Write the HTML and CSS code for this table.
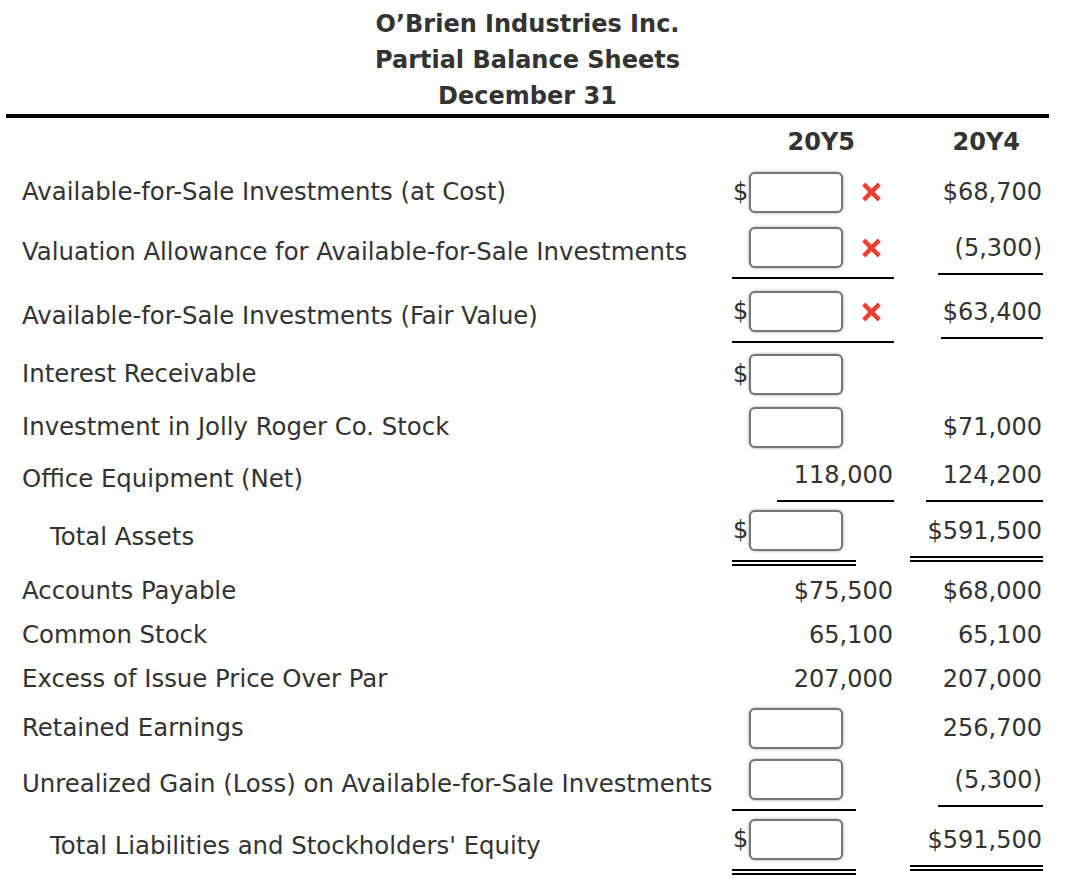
FILE: index.html
```html
<!DOCTYPE html>
<html lang="en">
<head>
<meta charset="utf-8">
<title>O’Brien Industries Inc. Partial Balance Sheets</title>
<link rel="stylesheet" href="styles.css">
</head>
<body>
<div class="sheet">
  <div class="title">
    <div>O’Brien Industries Inc.</div>
    <div>Partial Balance Sheets</div>
    <div>December 31</div>
  </div>

  <div class="row h48 head">
    <div class="lbl"></div>
    <div class="cell hd5">20Y5</div>
    <div class="cell hd4">20Y4</div>
  </div>

  <div class="row h52">
    <div class="lbl">Available-for-Sale Investments (at Cost)</div>
    <div class="cell start"><span class="ans"><span class="dol">$</span><input type="text"><svg class="mark" viewBox="0 0 19 18"><path d="M1.8 1.2 L17.2 16.8 M17.2 1.2 L1.8 16.8"/></svg></span></div>
    <div class="cell"><span class="num">$68,700</span></div>
  </div>

  <div class="row h68">
    <div class="lbl">Valuation Allowance for Available-for-Sale Investments</div>
    <div class="cell start"><span class="ans ul"><span class="dol"></span><input type="text"><svg class="mark" viewBox="0 0 19 18"><path d="M1.8 1.2 L17.2 16.8 M17.2 1.2 L1.8 16.8"/></svg></span></div>
    <div class="cell"><span class="num ul">(5,300)</span></div>
  </div>

  <div class="row h60">
    <div class="lbl">Available-for-Sale Investments (Fair Value)</div>
    <div class="cell start"><span class="ans ul"><span class="dol">$</span><input type="text"><svg class="mark" viewBox="0 0 19 18"><path d="M1.8 1.2 L17.2 16.8 M17.2 1.2 L1.8 16.8"/></svg></span></div>
    <div class="cell"><span class="num ul tight">$63,400</span></div>
  </div>

  <div class="row h56">
    <div class="lbl">Interest Receivable</div>
    <div class="cell start"><span class="ans"><span class="dol">$</span><input type="text"></span></div>
    <div class="cell"></div>
  </div>

  <div class="row h50">
    <div class="lbl">Investment in Jolly Roger Co. Stock</div>
    <div class="cell start"><span class="ans"><span class="dol"></span><input type="text"></span></div>
    <div class="cell"><span class="num">$71,000</span></div>
  </div>

  <div class="row h54">
    <div class="lbl">Office Equipment (Net)</div>
    <div class="cell"><span class="num ul">118,000</span></div>
    <div class="cell"><span class="num ul">124,200</span></div>
  </div>

  <div class="row h62">
    <div class="lbl indent">Total Assets</div>
    <div class="cell start"><span class="ans dul"><span class="dol">$</span><input type="text"></span></div>
    <div class="cell"><span class="num dul">$591,500</span></div>
  </div>

  <div class="row h46">
    <div class="lbl">Accounts Payable</div>
    <div class="cell"><span class="num">$75,500</span></div>
    <div class="cell"><span class="num">$68,000</span></div>
  </div>

  <div class="row h42">
    <div class="lbl">Common Stock</div>
    <div class="cell"><span class="num">65,100</span></div>
    <div class="cell"><span class="num">65,100</span></div>
  </div>

  <div class="row h46">
    <div class="lbl">Excess of Issue Price Over Par</div>
    <div class="cell"><span class="num">207,000</span></div>
    <div class="cell"><span class="num">207,000</span></div>
  </div>

  <div class="row h52">
    <div class="lbl">Retained Earnings</div>
    <div class="cell start"><span class="ans"><span class="dol"></span><input type="text"></span></div>
    <div class="cell"><span class="num">256,700</span></div>
  </div>

  <div class="row h60">
    <div class="lbl">Unrealized Gain (Loss) on Available-for-Sale Investments</div>
    <div class="cell start"><span class="ans ul"><span class="dol"></span><input type="text"></span></div>
    <div class="cell"><span class="num ul">(5,300)</span></div>
  </div>

  <div class="row h64">
    <div class="lbl indent">Total Liabilities and Stockholders' Equity</div>
    <div class="cell start"><span class="ans dul"><span class="dol">$</span><input type="text"></span></div>
    <div class="cell"><span class="num dul">$591,500</span></div>
  </div>
</div>
</body>
</html>
```

FILE: styles.css
```css
html, body {
  margin: 0;
  padding: 0;
  background: #ffffff;
}

.sheet {
  margin-left: 6px;
  width: 1043px;
  font-family: "DejaVu Sans", Verdana, sans-serif;
  font-size: 24px;
  color: #333333;
}

.title {
  padding-top: 6px;
  text-align: center;
  font-weight: bold;
  line-height: 36px;
  border-bottom: 4px solid #000000;
}

.row {
  display: grid;
  grid-template-columns: 726px 162px 149px;
  align-items: center;
}

.h42 { height: 42px; }
.h46 { height: 46px; }
.h48 { height: 48px; }
.h50 { height: 50px; }
.h52 { height: 52px; }
.h54 { height: 54px; }
.h56 { height: 56px; }
.h60 { height: 60px; }
.h62 { height: 62px; }
.h64 { height: 64px; }
.h68 { height: 68px; }

.lbl {
  padding-left: 16px;
  font-size: 24.4px;
  line-height: 36px;
  white-space: nowrap;
}

.lbl.indent {
  padding-left: 44px;
}

.cell {
  display: flex;
  justify-content: flex-end;
}

.cell.start {
  justify-content: flex-start;
}

.head .cell {
  font-weight: bold;
  line-height: 36px;
}

.hd5 {
  padding-right: 39px;
}

.hd4 {
  padding-right: 23px;
}

.num {
  display: inline-block;
  line-height: 36px;
  padding-left: 17px;
  padding-right: 1px;
  white-space: nowrap;
}

.num.tight {
  padding-left: 2px;
}

.num.ul {
  padding-bottom: 7px;
  border-bottom: 2px solid #000000;
}

.num.dul {
  padding-bottom: 7px;
  border-bottom: 6px double #000000;
}

.ans {
  display: inline-flex;
  align-items: center;
  padding-right: 13px;
}

.ans.ul {
  margin-top: 2px;
  padding-bottom: 9px;
  border-bottom: 2px solid #000000;
}

.ans.dul {
  margin-top: 1px;
  padding-bottom: 9px;
  border-bottom: 6px double #000000;
}

.dol {
  display: inline-block;
  width: 16px;
  padding-left: 1px;
  line-height: 41px;
}

.ans input {
  box-sizing: border-box;
  width: 94px;
  height: 41px;
  margin: 0;
  padding: 0 6px;
  border: 2px solid #767676;
  border-radius: 6px;
  background: #ffffff;
  box-shadow: 0 0 3px rgba(0, 0, 0, 0.4);
  font: inherit;
  outline: none;
}

.mark {
  display: block;
  margin-left: 19px;
  width: 19px;
  height: 18px;
}

.mark path {
  fill: none;
  stroke: #e8412f;
  stroke-width: 4.6;
}
```
